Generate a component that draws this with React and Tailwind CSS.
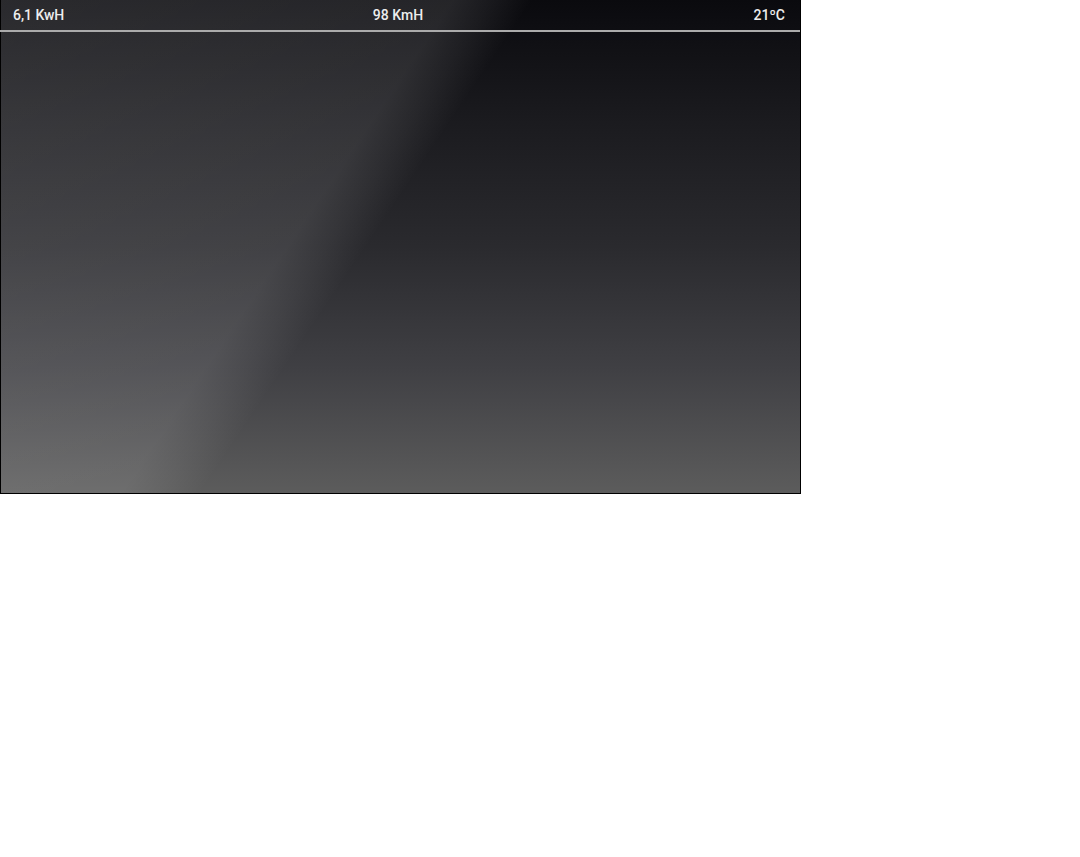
export default function App() {
  return (
    <div className="w-[1080px] h-[857px] bg-white">
      <div
        className="w-[801px] h-[494px] border border-t-0 border-black flex flex-col"
        style={{
          backgroundImage:
            "linear-gradient(124deg, rgba(255,255,255,0.13) 0%, rgba(255,255,255,0.11) 40%, rgba(255,255,255,0.06) 43.5%, rgba(255,255,255,0) 47%), linear-gradient(180deg, #0a0a0e 0%, #1b1b1f 25%, #2a2a2e 50%, #404044 75%, #5c5c5c 100%)",
        }}
      >
        <div className="h-[30px] flex items-center justify-between pl-3 pr-[15px] text-[14px] font-medium text-[#ededed] font-['Roboto',sans-serif]">
          <span className="w-[120px]">6,1 KwH</span>
          <span className="-ml-[2px]">98 KmH</span>
          <span className="w-[120px] text-right">21ºC</span>
        </div>
        <div className="h-[2px] bg-[#ababab] -ml-px" />
        <div className="flex-1" />
      </div>
    </div>
  );
}
